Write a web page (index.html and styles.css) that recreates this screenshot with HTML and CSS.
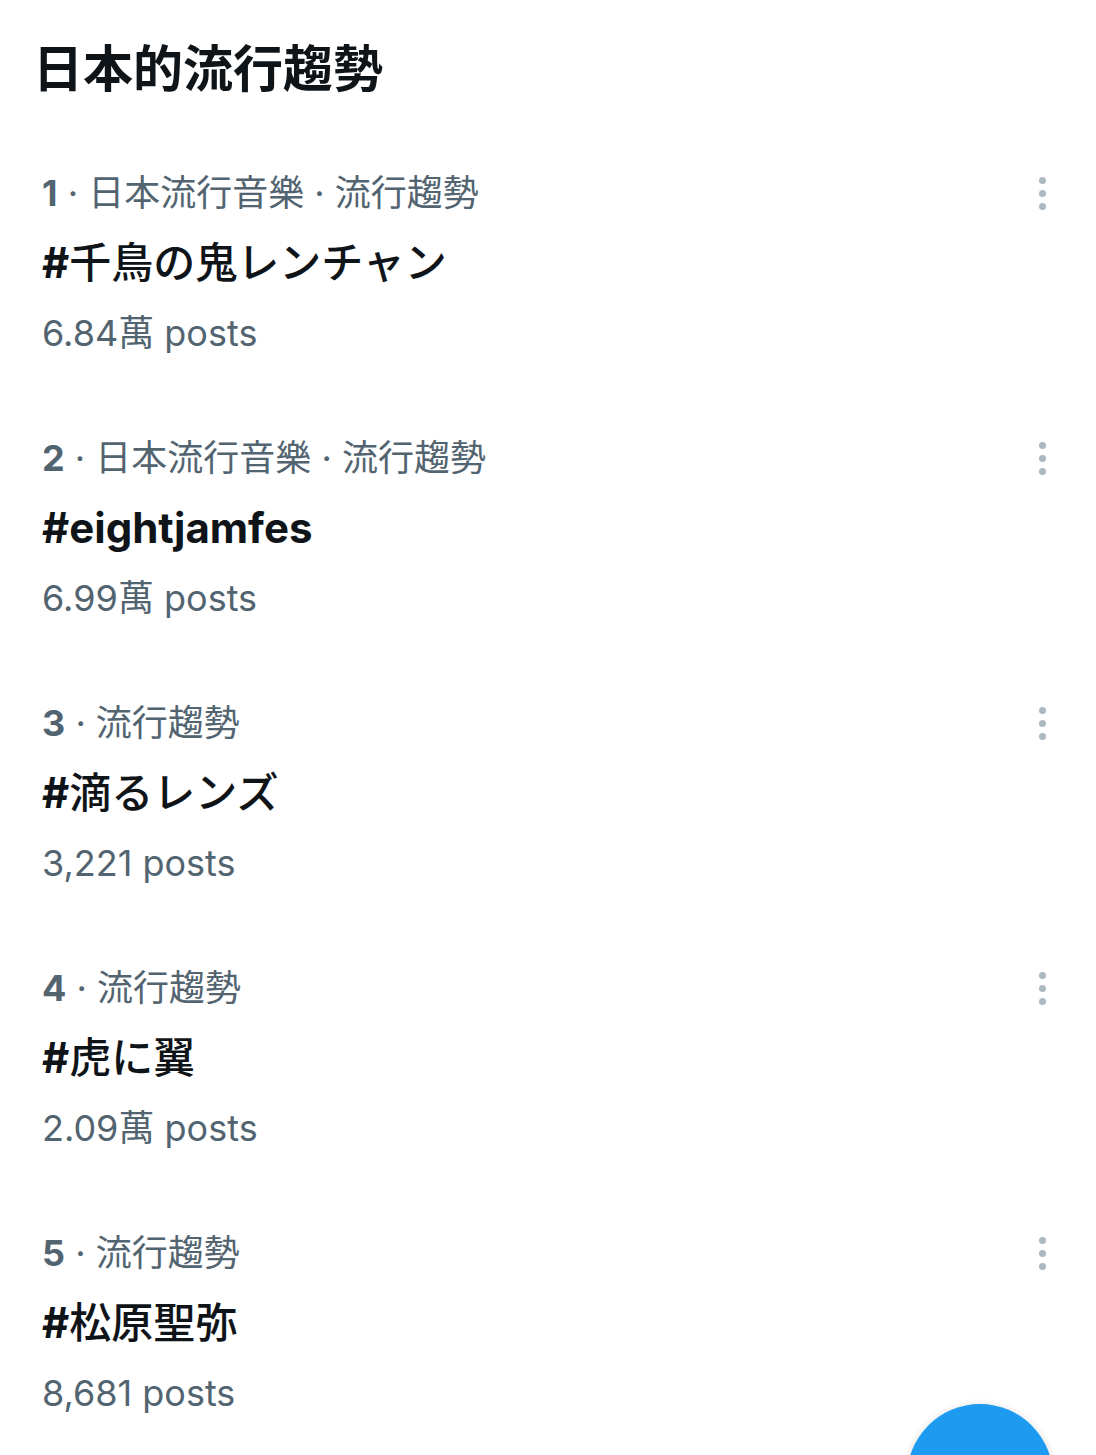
FILE: index.html
```html
<!DOCTYPE html>
<html lang="ja">
<head>
<meta charset="utf-8">
<title>日本的流行趨勢</title>
<link rel="stylesheet" href="styles.css">
</head>
<body>
<main class="page">
  <h1 class="title">日本的流行趨勢</h1>
  <ul class="trends">
    <li class="trend">
      <div class="trend-body">
        <div class="meta"><span class="rank">1</span> · 日本流行音樂 · 流行趨勢</div>
        <div class="tag">#<span class="cjk">千鳥の鬼レンチャン</span></div>
        <div class="count">6.84萬 posts</div>
      </div>
      <button class="more" aria-label="更多"><span class="dot"></span><span class="dot"></span><span class="dot"></span></button>
    </li>
    <li class="trend">
      <div class="trend-body">
        <div class="meta"><span class="rank">2</span> · 日本流行音樂 · 流行趨勢</div>
        <div class="tag">#eightjamfes</div>
        <div class="count">6.99萬 posts</div>
      </div>
      <button class="more" aria-label="更多"><span class="dot"></span><span class="dot"></span><span class="dot"></span></button>
    </li>
    <li class="trend">
      <div class="trend-body">
        <div class="meta"><span class="rank">3</span> · 流行趨勢</div>
        <div class="tag">#<span class="cjk">滴るレンズ</span></div>
        <div class="count">3,221 posts</div>
      </div>
      <button class="more" aria-label="更多"><span class="dot"></span><span class="dot"></span><span class="dot"></span></button>
    </li>
    <li class="trend">
      <div class="trend-body">
        <div class="meta"><span class="rank">4</span> · 流行趨勢</div>
        <div class="tag">#<span class="cjk">虎に翼</span></div>
        <div class="count">2.09萬 posts</div>
      </div>
      <button class="more" aria-label="更多"><span class="dot"></span><span class="dot"></span><span class="dot"></span></button>
    </li>
    <li class="trend">
      <div class="trend-body">
        <div class="meta"><span class="rank">5</span> · 流行趨勢</div>
        <div class="tag">#<span class="cjk">松原聖弥</span></div>
        <div class="count">8,681 posts</div>
      </div>
      <button class="more" aria-label="更多"><span class="dot"></span><span class="dot"></span><span class="dot"></span></button>
    </li>
  </ul>
  <button class="fab" aria-label="發佈"></button>
</main>
</body>
</html>
```

FILE: styles.css
```css
html, body {
  margin: 0;
  padding: 0;
  background: #ffffff;
}

body {
  font-family: Inter, "Noto Sans CJK JP", "Noto Sans CJK TC", sans-serif;
  color: #0f1419;
  overflow: hidden;
}

.page {
  position: relative;
  width: 1096px;
  height: 1455px;
  overflow: hidden;
}

.title {
  margin: 0;
  padding: 25px 0 25px 33px;
  font-family: "Noto Sans CJK TC", "Noto Sans CJK JP", sans-serif;
  font-size: 50px;
  line-height: 80px;
  font-weight: 700;
  color: #0f1419;
}

.trends {
  list-style: none;
  margin: 0;
  padding: 0;
}

.trend {
  display: flex;
  align-items: flex-start;
  justify-content: space-between;
  padding: 28px 0 27px 42px;
  height: 210px;
}

.trend-body {
  display: flex;
  flex-direction: column;
}

.meta {
  font-size: 36px;
  line-height: 70px;
  color: #536471;
  font-weight: 400;
  white-space: nowrap;
}

.rank {
  font-weight: 700;
}

.tag {
  font-size: 42px;
  line-height: 70px;
  font-weight: 700;
  color: #0f1419;
  white-space: nowrap;
}

.tag .cjk {
  font-weight: 500;
}

.count {
  font-size: 36px;
  line-height: 70px;
  color: #536471;
  white-space: nowrap;
}

.more {
  display: flex;
  flex-direction: column;
  align-items: center;
  justify-content: center;
  gap: 6px;
  width: 40px;
  height: 70px;
  margin-right: 34px;
  padding: 0;
  border: 0;
  background: transparent;
}

.dot {
  width: 7px;
  height: 7px;
  border-radius: 50%;
  background: #aab8c2;
}

.fab {
  position: absolute;
  left: 907px;
  top: 1404px;
  width: 146px;
  height: 146px;
  border: 0;
  padding: 0;
  border-radius: 50%;
  background: #1d9bf0;
  box-shadow: 0 2px 8px rgba(0, 0, 0, 0.18);
}
```
